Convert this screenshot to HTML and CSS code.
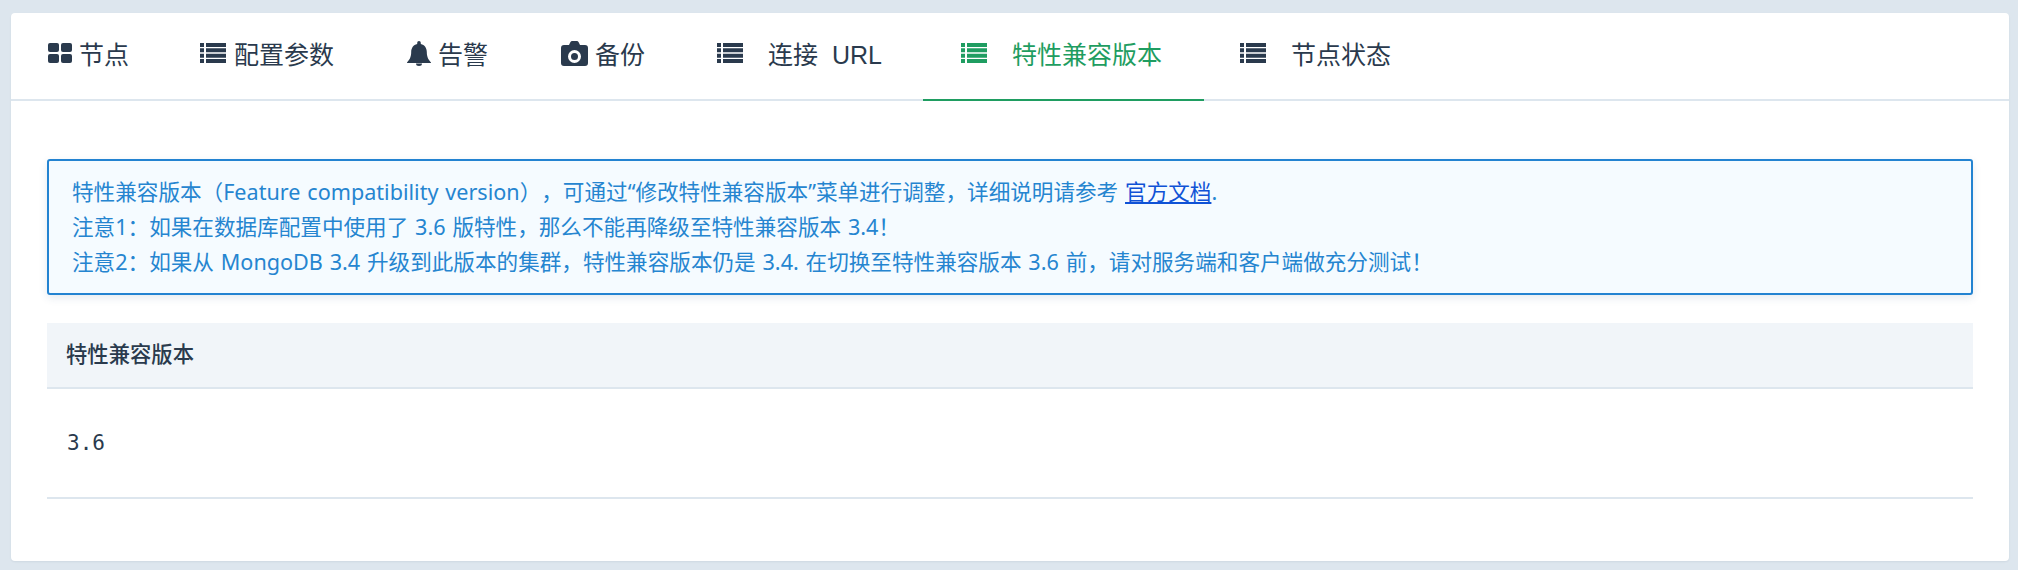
FILE: index.html
```html
<!DOCTYPE html>
<html>
<head>
  <meta charset="UTF-8">
  <title>特性兼容版本</title>
  <link rel="stylesheet" href="styles.css">
</head>
<body>
<div class="card">
  <ul class="tabs">
    <li class="tab">
      <svg class="icon icon-grid" viewBox="0 0 24 20"><rect x="0" y="0" width="11" height="9" rx="2"/><rect x="13" y="0" width="11" height="9" rx="2"/><rect x="0" y="11" width="11" height="9" rx="2"/><rect x="13" y="11" width="11" height="9" rx="2"/></svg>
      <span>节点</span>
    </li>
    <li class="tab">
      <svg class="icon icon-list" viewBox="0 0 26 20"><path d="M0 0h4v4H0zM6 0h20v4H6zM0 5.330h4v4H0zM6 5.330h20v4H6zM0 10.670h4v4H0zM6 10.670h20v4H6zM0 16h4v4H0zM6 16h20v4H6z"/></svg>
      <span>配置参数</span>
    </li>
    <li class="tab">
      <svg class="icon icon-bell" viewBox="0 0 24 25"><path d="M12 0a1.800 1.800 0 0 1 1.800 1.800v1.300c3.800.8 6 4 6 7.900 0 5.500 2 8 4.200 10.500v.5H0v-.5C2.200 19 4.200 16.500 4.200 11c0-3.900 2.200-7.100 6-7.900V1.800A1.800 1.800 0 0 1 12 0zM9 22.500h6a3 2.500 0 0 1-6 0z"/></svg>
      <span>告警</span>
    </li>
    <li class="tab">
      <svg class="icon icon-camera" viewBox="0 0 27 25"><path fill-rule="evenodd" d="M8 4l1.200-2.600A2.500 2.500 0 0 1 11.500 0h4a2.500 2.500 0 0 1 2.300 1.400L19 4h5a3 3 0 0 1 3 3v15a3 3 0 0 1-3 3H3a3 3 0 0 1-3-3V7a3 3 0 0 1 3-3zM13.500 9a6.500 6.500 0 1 0 0 13 6.500 6.500 0 0 0 0-13zM13.500 12a3.500 3.500 0 1 1 0 7 3.500 3.500 0 0 1 0-7z"/></svg>
      <span>备份</span>
    </li>
    <li class="tab tab-wide tab-url">
      <svg class="icon icon-list" viewBox="0 0 26 20"><path d="M0 0h4v4H0zM6 0h20v4H6zM0 5.330h4v4H0zM6 5.330h20v4H6zM0 10.670h4v4H0zM6 10.670h20v4H6zM0 16h4v4H0zM6 16h20v4H6z"/></svg>
      <span>连接 &nbsp;URL</span>
    </li>
    <li class="tab tab-wide active">
      <svg class="icon icon-list" viewBox="0 0 26 20"><path d="M0 0h4v4H0zM6 0h20v4H6zM0 5.330h4v4H0zM6 5.330h20v4H6zM0 10.670h4v4H0zM6 10.670h20v4H6zM0 16h4v4H0zM6 16h20v4H6z"/></svg>
      <span>特性兼容版本</span>
    </li>
    <li class="tab tab-wide tab-last">
      <svg class="icon icon-list" viewBox="0 0 26 20"><path d="M0 0h4v4H0zM6 0h20v4H6zM0 5.330h4v4H0zM6 5.330h20v4H6zM0 10.670h4v4H0zM6 10.670h20v4H6zM0 16h4v4H0zM6 16h20v4H6z"/></svg>
      <span>节点状态</span>
    </li>
  </ul>

  <div class="content">
    <div class="alert">
      <p>特性兼容版本（Feature compatibility version），可通过“修改特性兼容版本”菜单进行调整，详细说明请参考 <a href="#">官方文档</a>.</p>
      <p>注意1：如果在数据库配置中使用了 3.6 版特性，那么不能再降级至特性兼容版本 3.4！</p>
      <p>注意2：如果从 MongoDB 3.4 升级到此版本的集群，特性兼容版本仍是 3.4. 在切换至特性兼容版本 3.6 前，请对服务端和客户端做充分测试！</p>
    </div>

    <table class="fcv">
      <thead>
        <tr><th>特性兼容版本</th></tr>
      </thead>
      <tbody>
        <tr><td>3.6</td></tr>
      </tbody>
    </table>
  </div>
</div>
</body>
</html>
```

FILE: styles.css
```css
* {
  box-sizing: border-box;
}
body {
  margin: 0;
  padding: 13px 9px 9px 11px;
  height: 570px;
  overflow: hidden;
  background-color: #dde6ee;
  font-family: "Liberation Sans", "Noto Sans CJK SC", sans-serif;
  color: #2a3a4d;
  text-spacing-trim: space-all;
}
.card {
  height: 548px;
  background-color: #fff;
  border-radius: 4px;
  box-shadow: 0 1px 2px rgba(40, 60, 90, 0.08);
}

/* tabs */
.tabs {
  display: flex;
  margin: 0;
  padding: 0;
  height: 88px;
  list-style: none;
  border-bottom: 2px solid #dde6ee;
}
.tab {
  display: flex;
  align-items: center;
  height: 88px;
  padding: 0 34px 6px 37px;
  font-size: 25px;
  white-space: nowrap;
  border-bottom: 2px solid transparent;
}
.tab-wide {
  padding-left: 38px;
  padding-right: 42px;
}
.tab-url {
  padding-right: 41px;
}
.tab-last {
  padding-left: 36px;
}
.tab.active {
  color: #1f9d61;
  border-bottom-color: #1f9d61;
}
.icon {
  flex: none;
  fill: currentColor;
  margin-right: 7px;
}
.icon-grid {
  width: 24px;
  height: 20px;
}
.icon-list {
  width: 26px;
  height: 20px;
  margin-right: 8px;
}
.icon-bell {
  width: 24px;
  height: 25px;
  margin-left: 2px;
}
.icon-camera {
  width: 27px;
  height: 25px;
  margin-left: 2px;
}
.tab-wide .icon {
  margin-right: 25px;
}

/* content */
.content {
  padding: 58px 36px 0;
}
.alert {
  height: 136px;
  padding: 13px 23px 0;
  font-family: "Noto Sans", "Noto Sans CJK SC", sans-serif;
  font-size: 21.6px;
  line-height: 35px;
  word-spacing: 1.2px;
  color: #2585d0;
  background-color: #f5fbff;
  border: 2px solid #2383d1;
  border-radius: 3px;
  box-shadow: 0 3px 8px rgba(40, 80, 120, 0.12);
}
.alert p {
  margin: 0;
}
.alert a {
  color: #0f52d6;
}
.fcv {
  width: 100%;
  margin-top: 28px;
  border-collapse: collapse;
  font-size: 21.33px;
}
.fcv th {
  height: 65px;
  padding: 0 19px 6px;
  text-align: left;
  font-weight: 500;
  background-color: #f1f5f9;
  border-bottom: 2px solid #dde6ee;
}
.fcv td {
  height: 110px;
  padding: 0 20px;
  font-family: "DejaVu Sans Mono", monospace;
  font-size: 21px;
  border-bottom: 2px solid #dde6ee;
}
```
